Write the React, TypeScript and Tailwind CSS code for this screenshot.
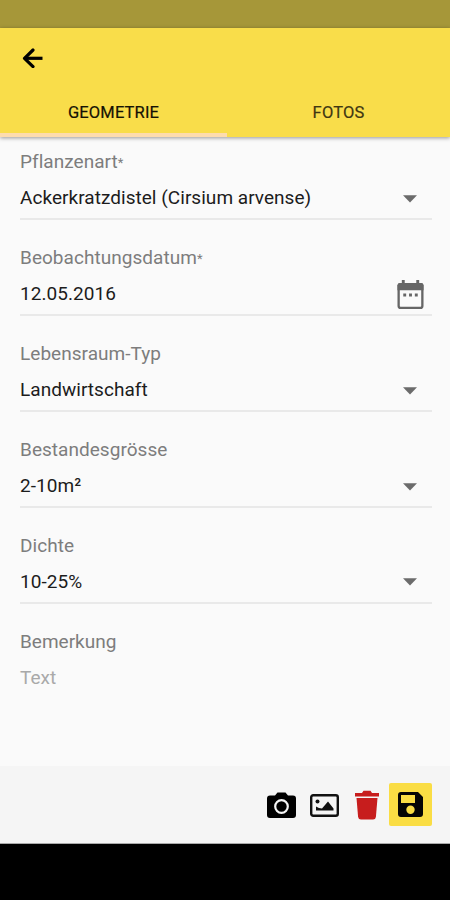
import type { ReactNode } from "react";

function Caret() {
  return (
    <svg className="mr-[15px] mt-px" width="14" height="8" viewBox="0 0 14 8">
      <path d="M0 0.3h14L7 7.5z" fill="#6b6b6b" />
    </svg>
  );
}

function CalendarIcon() {
  return (
    <svg className="mr-[8px] mt-px" width="27" height="31" viewBox="0 0 28 31">
      <path d="M5 0.500h3v3.500H5zM20 0.500h3v3.500h-3z" fill="#666" />
      <rect x="1.7" y="4.7" width="24.6" height="24.6" rx="2" fill="none" stroke="#666" strokeWidth="2.4" />
      <path d="M0.500 6q0-2.500 2.500-2.500h22q2.500 0 2.500 2.500v5H.5z" fill="#666" />
      <path d="M6.500 14.500h3v3h-3zM12.500 14.500h3v3h-3zM18.500 14.500h3v3h-3z" fill="#666" />
    </svg>
  );
}

type FieldProps = {
  label: string;
  value: string;
  required?: boolean;
  icon?: ReactNode;
};

function Field({ label, value, required, icon = <Caret /> }: FieldProps) {
  return (
    <div className="flex h-[70px] flex-col border-b-2 border-[#e9e9e9]">
      <label className="flex h-6 items-center text-[19px] tracking-[0.04px] text-[#7d7d7d]">
        {label}
        {required && <span className="text-[13px]">*</span>}
      </label>
      <div className="mt-3 flex h-6 items-center justify-between text-[19px] tracking-[0.04px] text-[#1c1c1c]">
        <span>{value}</span>
        {icon}
      </div>
    </div>
  );
}

function Header() {
  return (
    <header className="relative flex h-[109px] flex-col bg-[#f9dd4a] shadow-[0_1px_4px_rgba(0,0,0,0.4)]">
      <button type="button" className="ml-[22px] mt-5 h-5 w-[22px]">
        <svg width="22" height="20" viewBox="0 0 22 20" fill="none" stroke="#000" strokeWidth="3.2">
          <path d="M20.500 10.300H2.500" />
          <path d="M11 2L2.500 10.300l8.500 8.300" strokeLinecap="round" strokeLinejoin="round" />
        </svg>
      </button>
      <nav className="mt-auto flex h-[52px] text-[16.5px]">
        <div className="flex w-[227px] items-center justify-center border-b-4 border-[#fddcae] pt-2 tracking-[0.15px] text-[#151204] [-webkit-text-stroke:0.2px_#151204]">
          GEOMETRIE
        </div>
        <div className="flex flex-1 items-center justify-center pt-1 tracking-[0.15px] text-[#3f3712] [-webkit-text-stroke:0.2px_#3f3712]">
          FOTOS
        </div>
      </nav>
    </header>
  );
}

function Toolbar() {
  return (
    <footer className="flex h-[78px] items-center border-b border-[#aaa] bg-[#f5f5f5] pl-[267px]">
      <button type="button" className="mt-0.5">
        <svg width="29" height="30" viewBox="0 0 29 30">
          <path d="M3 4.500h5l2.500-3h8l2.500 3h5q3 0 3 3V24q0 3-3 3H3q-3 0-3-3V7.500q0-3 3-3z" fill="#000" />
          <circle cx="14.500" cy="15.500" r="6.300" fill="none" stroke="#f5f5f5" strokeWidth="2.200" />
        </svg>
      </button>
      <button type="button" className="ml-3.5 mt-0.5">
        <svg width="29" height="30" viewBox="0 0 29 30">
          <rect x="1.200" y="4.200" width="26.600" height="20.600" rx="2" fill="none" stroke="#111" strokeWidth="2.400" />
          <circle cx="7.500" cy="10.500" r="2" fill="#111" />
          <path d="M6 19.500v-4l3 1.500 3 0.500 6-7 5.500 7v2z" fill="#111" />
        </svg>
      </button>
      <button type="button" className="ml-[15px]">
        <svg width="26" height="32" viewBox="0 0 26 32" fill="#c71d1d">
          <path d="M1 4h7l1.500-2.300h7L18 4h7v3.500H1z" />
          <path d="M2.500 9h21l-1.600 19q-.3 2.500-2.900 2.500H7q-2.600 0-2.900-2.500z" />
        </svg>
      </button>
      <button type="button" className="ml-[9px] flex h-[43px] w-[43px] items-center justify-center rounded-[2px] bg-[#fadd44]">
        <svg width="25" height="25" viewBox="0 0 25 25">
          <path
            d="M3 0h17l5 5v17q0 3-3 3H3q-3 0-3-3V3q0-3 3-3zM3 3v8h14V3zM12.500 13.500a4.200 4.200 0 1 0 0 8.400a4.200 4.200 0 1 0 0-8.400z"
            fill="#050505"
            fillRule="evenodd"
          />
        </svg>
      </button>
    </footer>
  );
}

export default function App() {
  return (
    <div className="flex h-[900px] w-[450px] flex-col overflow-hidden bg-[#fafafa] font-['Roboto',sans-serif]">
      <div className="h-7 bg-[#a69739]" />
      <Header />
      <main className="flex flex-1 flex-col gap-[25.9px] pl-5 pr-[18px] pt-[13.4px]">
        <Field label="Pflanzenart" value="Ackerkratzdistel (Cirsium arvense)" required />
        <Field label="Beobachtungsdatum" value="12.05.2016" required icon={<CalendarIcon />} />
        <Field label="Lebensraum-Typ" value="Landwirtschaft" />
        <Field label="Bestandesgrösse" value="2-10m²" />
        <Field label="Dichte" value="10-25%" />
        <div className="text-[19px]">
          <div className="flex h-6 items-center text-[#7d7d7d]">Bemerkung</div>
          <div className="mt-3 flex h-6 items-center text-[#a9a9a9]">Text</div>
        </div>
      </main>
      <Toolbar />
      <div className="h-14 bg-black" />
    </div>
  );
}
